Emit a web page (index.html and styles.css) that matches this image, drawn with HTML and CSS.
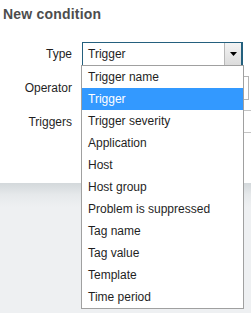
FILE: index.html
```html
<!DOCTYPE html>
<html>
<head>
<meta charset="utf-8">
<link rel="stylesheet" href="styles.css">
</head>
<body>
<div class="dialog">
  <h4 class="title">New condition</h4>
  <div class="form">
    <div class="row">
      <label class="lbl">Type</label>
      <div class="select focus">
        <span class="value">Trigger</span>
        <span class="btn"><svg width="7" height="4" viewBox="0 0 7 4"><path d="M0 0h7L3.5 4z" fill="#000"/></svg></span>
      </div>
    </div>
    <div class="row">
      <label class="lbl">Operator</label>
      <div class="select plain"></div>
    </div>
    <div class="row">
      <label class="lbl">Triggers</label>
      <div class="multi"></div>
    </div>
  </div>
</div>
<div class="backdrop"></div>
<ul class="listbox">
  <li>Trigger name</li>
  <li class="sel">Trigger</li>
  <li>Trigger severity</li>
  <li>Application</li>
  <li>Host</li>
  <li>Host group</li>
  <li>Problem is suppressed</li>
  <li>Tag name</li>
  <li>Tag value</li>
  <li>Template</li>
  <li>Time period</li>
</ul>
</body>
</html>
```

FILE: styles.css
```css
html, body {
  margin: 0;
  padding: 0;
  width: 251px;
  height: 313px;
  overflow: hidden;
  background: #eef0f2;
  font-family: "Liberation Sans", Arial, sans-serif;
  font-size: 12px;
  color: #1f1f1f;
}

.dialog {
  background: #fff;
  height: 183px;
  box-sizing: border-box;
  padding-top: 6px;
}

.title {
  margin: 0;
  padding-left: 3px;
  font-size: 14px;
  line-height: 16px;
  font-weight: bold;
  color: #4d4d4d;
  letter-spacing: 0.2px;
}

.form {
  margin-top: 20px;
  display: flex;
  flex-direction: column;
  gap: 10px;
}

.row {
  display: flex;
  align-items: flex-start;
  gap: 10px;
  height: 24px;
}

.lbl {
  width: 72px;
  flex: none;
  text-align: right;
  line-height: 24px;
}

.select {
  box-sizing: border-box;
  height: 24px;
  display: flex;
  align-items: stretch;
  flex: none;
}

.select.focus {
  width: 161px;
  border: 1px solid #24607e;
  border-right-width: 2px;
}

.select.plain {
  width: 167px;
  border: 1px solid #b4b4b4;
}

.value {
  flex: 1;
  padding-left: 5px;
  line-height: 22px;
}

.btn {
  width: 16px;
  flex: none;
  display: flex;
  align-items: center;
  justify-content: center;
  background: linear-gradient(#f3f3f3, #dcdcdc);
  border-left: 1px solid #b8b8b8;
}

.multi {
  box-sizing: border-box;
  width: 169px;
  height: 23px;
  flex: none;
  border: 1px solid #c4c4c4;
  border-right: none;
}

.backdrop {
  height: 130px;
  background: linear-gradient(#d3d8db, #e6e9eb 12px, #eef0f2 24px);
}

.listbox {
  position: absolute;
  left: 81px;
  top: 65px;
  width: 163px;
  box-sizing: border-box;
  margin: 0;
  padding: 0;
  list-style: none;
  background: #fff;
  border: 1px solid #a0a0a0;
}

.listbox li {
  height: 22px;
  line-height: 22px;
  padding-left: 6px;
  white-space: nowrap;
}

.listbox li.sel {
  background: #3399ff;
  color: #fff;
}
```
